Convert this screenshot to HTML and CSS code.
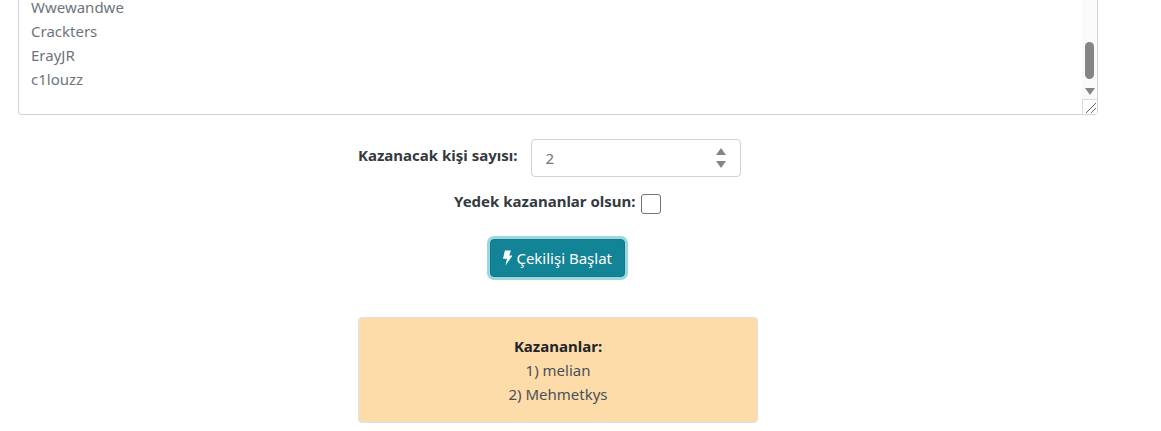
FILE: index.html
```html
<!DOCTYPE html>
<html lang="tr">
<head>
  <meta charset="UTF-8">
  <meta name="viewport" content="width=device-width, initial-scale=1.0">
  <title>Çekiliş</title>
  <link rel="stylesheet" href="styles.css">
</head>
<body>
  <!-- Katılımcı listesi -->
  <div class="names">
    <div class="names-list">
      <div>Wwewandwe</div>
      <div>Crackters</div>
      <div>ErayJR</div>
      <div>c1louzz</div>
    </div>
    <div class="scrollbar">
      <div class="scroll-thumb"></div>
      <svg class="scroll-arrow" width="10" height="7" viewBox="0 0 10 7"><path d="M0 0h10L5 7z"/></svg>
      <div class="resizer">
        <svg width="15" height="15" viewBox="0 0 15 15"><path d="M4 14L14 4M9 14l5-5" stroke="#666" stroke-width="1" fill="none"/></svg>
      </div>
    </div>
  </div>

  <div class="count-row">
    <label class="field-label">Kazanacak kişi sayısı:</label>
    <div class="number-input">
      <span>2</span>
      <svg class="spinner" width="10" height="20" viewBox="0 0 10 20">
        <path d="M5 0l5 7H0z"/>
        <path d="M0 13h10l-5 7z"/>
      </svg>
    </div>
  </div>

  <div class="backup-row">
    <label class="field-label">Yedek kazananlar olsun:</label>
    <span class="checkbox"></span>
  </div>

  <div class="button-row">
    <button class="start-btn">
      <svg width="10" height="16" viewBox="0 0 10 16"><path d="M2 0h6.4L6.6 5.4H10L2.6 16l1.6-7.2H0z" fill="#fff"/></svg>
      Çekilişi Başlat
    </button>
  </div>

  <div class="winners">
    <strong>Kazananlar:</strong>
    <div>1) melian</div>
    <div>2) Mehmetkys</div>
  </div>
</body>
</html>
```

FILE: styles.css
```css
body {
  margin: 0;
  font-family: "Noto Sans", "Open Sans", sans-serif;
  font-size: 15px;
  line-height: 24px;
  color: #212529;
  background-color: #fff;
  overflow: hidden;
}
/* Textarea */
.names {
  display: flex;
  justify-content: space-between;
  width: 1080px;
  height: 115px;
  margin-left: 18px;
  box-sizing: border-box;
  border: 1px solid #ced4da;
  border-top: none;
  border-radius: 0 0 4px 4px;
}
.names-list {
  margin-top: -5px;
  padding-left: 12px;
  color: #6c757d;
}
.scrollbar {
  display: flex;
  flex-direction: column;
  align-items: center;
  width: 15px;
  background-color: #fafafa;
}
.scroll-thumb {
  width: 9px;
  height: 37px;
  margin-top: 42px;
  border-radius: 5px;
  background-color: #858585;
}
.scroll-arrow {
  margin-top: 9px;
  fill: #858585;
}
.resizer {
  width: 15px;
  height: 15px;
  margin-top: auto;
  background-color: #fff;
  box-shadow: inset 1px 1px 0 #dcdcdc;
}
.resizer svg {
  display: block;
}
/* Form */
.count-row {
  display: flex;
  align-items: center;
  margin: 24px 0 0 358px;
}
.field-label {
  margin-bottom: 6px;
  font-weight: 700;
  color: #343a40;
}
.number-input {
  display: flex;
  align-items: center;
  justify-content: space-between;
  width: 210px;
  height: 38px;
  margin-left: 14px;
  padding: 0 14px 0 13px;
  box-sizing: border-box;
  border: 1px solid #ced4da;
  border-radius: 4px;
  color: #6c757d;
}
.spinner {
  fill: #858585;
}
.backup-row {
  display: flex;
  align-items: center;
  margin: 12px 0 0 454px;
}
.checkbox {
  width: 20px;
  height: 20px;
  margin-left: 5px;
  box-sizing: border-box;
  border: 1px solid #6c757d;
  border-radius: 3px;
  background-color: #fff;
}
.button-row {
  margin: 20px 0 0 490px;
}
.start-btn {
  display: flex;
  align-items: center;
  gap: 4px;
  width: 135px;
  height: 38px;
  padding: 0 12px;
  border: 1px solid #117a8b;
  border-radius: 4px;
  background-color: #138496;
  color: #fff;
  font: inherit;
  white-space: nowrap;
  box-shadow: 0 0 0 3px rgba(58, 176, 195, 0.5);
}
/* Result */
.winners {
  width: 400px;
  height: 106px;
  margin: 40px 0 0 358px;
  padding: 16px 0;
  box-sizing: border-box;
  border: 1px solid #dee2e6;
  border-radius: 4px;
  background-color: #fddcaa;
  text-align: center;
  color: #495057;
}
.winners strong {
  color: #212529;
}
```
